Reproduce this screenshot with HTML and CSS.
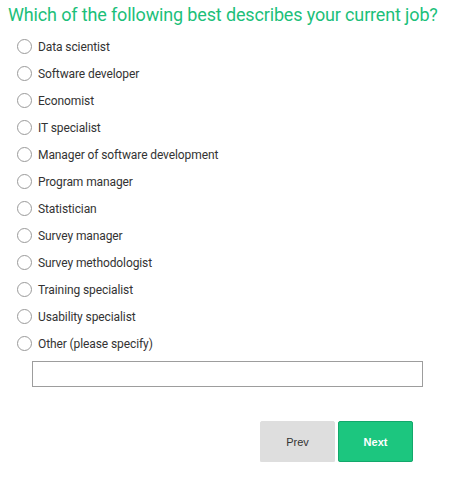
FILE: index.html
```html
<!DOCTYPE html>
<html>
<head>
<meta charset="utf-8">
<link rel="stylesheet" href="styles.css">
</head>
<body>
<div class="survey">
  <h1 class="question">Which of the following best describes your current job?</h1>
  <ul class="options">
    <li class="option"><span class="radio"></span><span class="label">Data scientist</span></li>
    <li class="option"><span class="radio"></span><span class="label">Software developer</span></li>
    <li class="option"><span class="radio"></span><span class="label">Economist</span></li>
    <li class="option"><span class="radio"></span><span class="label">IT specialist</span></li>
    <li class="option"><span class="radio"></span><span class="label">Manager of software development</span></li>
    <li class="option"><span class="radio"></span><span class="label">Program manager</span></li>
    <li class="option"><span class="radio"></span><span class="label">Statistician</span></li>
    <li class="option"><span class="radio"></span><span class="label">Survey manager</span></li>
    <li class="option"><span class="radio"></span><span class="label">Survey methodologist</span></li>
    <li class="option"><span class="radio"></span><span class="label">Training specialist</span></li>
    <li class="option"><span class="radio"></span><span class="label">Usability specialist</span></li>
    <li class="option"><span class="radio"></span><span class="label">Other (please specify)</span></li>
  </ul>
  <div class="other-field"><input class="other-input" type="text"></div>
  <div class="nav">
    <button class="btn btn-prev">Prev</button>
    <button class="btn btn-next">Next</button>
  </div>
</div>
</body>
</html>
```
FILE: styles.css
```css
html, body {
  margin: 0;
  padding: 0;
  background: #ffffff;
}
body {
  font-family: Roboto, "Liberation Sans", sans-serif;
}
.survey {
  padding: 3px 0 0 8px;
}
.question {
  margin: 0;
  font-family: Roboto, sans-serif;
  font-weight: 400;
  font-size: 18px;
  letter-spacing: -0.15px;
  line-height: 24px;
  color: #1cbf7a;
  white-space: nowrap;
}
.options {
  list-style: none;
  margin: 6px 0 0 0;
  padding: 0;
}
.option {
  display: flex;
  align-items: center;
  height: 27px;
  padding-left: 9px;
}
.radio {
  box-sizing: border-box;
  width: 15px;
  height: 15px;
  border: 1px solid #9a9a9a;
  border-radius: 50%;
  margin-right: 6px;
  flex: none;
}
.label {
  font-size: 12px;
  letter-spacing: -0.1px;
  color: #333333;
}
.other-field {
  padding: 4px 0 0 24px;
}
.other-input {
  display: block;
  box-sizing: border-box;
  width: 391px;
  height: 26px;
  margin: 0;
  border: 1px solid #9d9d9d;
  border-radius: 0;
  outline: none;
}
.nav {
  display: flex;
  gap: 3px;
  padding: 34px 0 0 252px;
}
.btn {
  box-sizing: border-box;
  width: 75px;
  height: 41px;
  margin: 0;
  font-family: "Liberation Sans", Arial, sans-serif;
  font-size: 11px;
  border-radius: 2px;
  box-shadow: 0 2px 0 #ececec;
  cursor: pointer;
}
.btn-prev {
  background: #dedede;
  border: 1px solid #dedede;
  color: #333333;
}
.btn-next {
  background: #1cc67f;
  border: 1px solid #13a86b;
  color: #ffffff;
  font-weight: 700;
}
```
